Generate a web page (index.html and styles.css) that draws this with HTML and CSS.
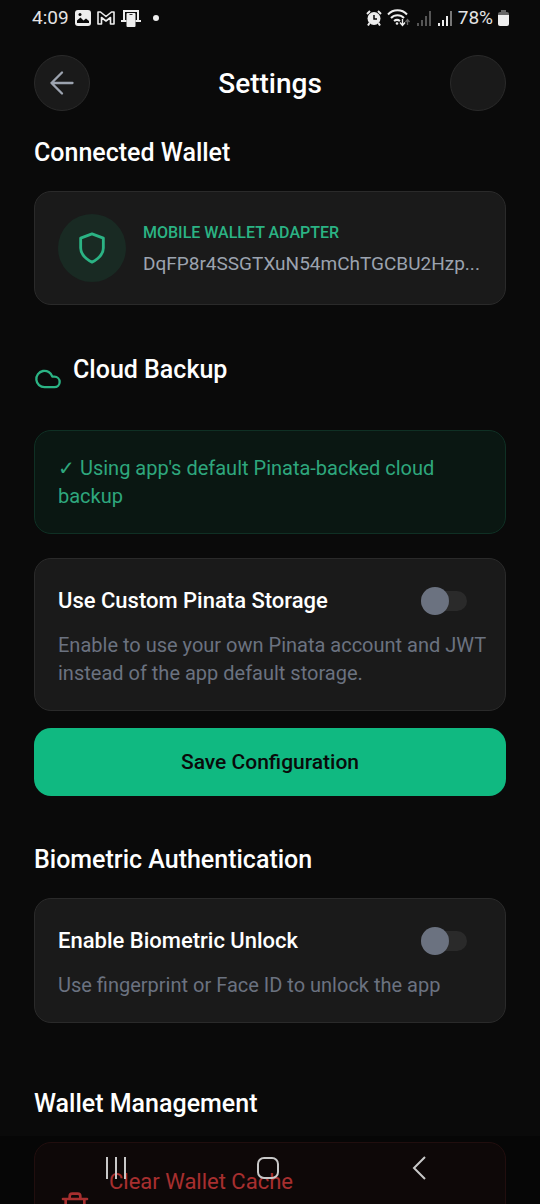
FILE: index.html
```html
<!DOCTYPE html>
<html lang="en">
<head>
<meta charset="utf-8">
<meta name="viewport" content="width=device-width, initial-scale=1">
<title>Settings</title>
<link rel="stylesheet" href="styles.css">
</head>
<body>
<div class="status-bar">
  <div class="status-group">
    <span class="status-text">4:09</span>
    <svg width="16" height="16" viewBox="0 0 16 16"><rect x="0" y="0" width="16" height="16" rx="3" fill="#eee"/><path d="M2 13V10.500l3.500-3 3 3 2.500-2 3 2.500v2z" fill="#0a0a0a"/><circle cx="5" cy="4.500" r="1.500" fill="#0a0a0a"/></svg>
    <svg width="18" height="14" viewBox="0 0 18 14" fill="none" stroke="#eee" stroke-width="1.600" stroke-linejoin="round"><path d="M1 13V1h2.500L9 5.500 14.500 1H17v12h-3.500V6.500L9 10 4.500 6.500V13z"/></svg>
    <svg width="20" height="18" viewBox="0 0 20 18" fill="none" stroke="#eee" stroke-width="2"><path d="M3 11V2h14v9M0 12h5.500M14.500 12H20"/><rect x="5.500" y="4" width="9" height="14" rx="1" fill="#eee" stroke="none"/><path d="M8.500 5.500h3" stroke="#333" stroke-width="1"/></svg>
    <span class="status-dot"></span>
  </div>
  <div class="status-group status-group-end">
    <svg width="16" height="16" viewBox="0 0 16 16"><circle cx="8" cy="8.500" r="6.500" fill="#eee"/><path d="M1 4l3-3M15 4l-3-3M3.500 13L2 15.500M12.500 13l1.500 2.500" stroke="#eee" stroke-width="2"/><path d="M8 5v4h3" fill="none" stroke="#0a0a0a" stroke-width="1.500"/></svg>
    <svg width="24" height="18" viewBox="0 0 24 18" fill="none" stroke="#eee" stroke-width="2"><path d="M1 5.500a13 13 0 0 1 19 0M4 9a9 9 0 0 1 13 0M7 12a5 5 0 0 1 6 0"/><circle cx="10" cy="14.500" r="1.300" fill="#eee" stroke="none"/><path d="M15.500 10v6M13 13.500l2.500 3 2.500-3" stroke-width="1.400"/><path d="M20.500 16v-5M18.500 13l2-2.500 2 2.500" stroke="#666" stroke-width="1.300"/></svg>
    <svg width="16" height="16" viewBox="0 0 16 16" stroke="#555" stroke-width="2"><path d="M2 16v-3M6 16v-6M10 16V6"/><path d="M14 16V1"/></svg>
    <svg width="16" height="16" viewBox="0 0 16 16" stroke="#eee" stroke-width="2"><path d="M2 16v-3M6 16v-6M10 16V6"/><path d="M14 16V1" stroke="#777"/></svg>
    <span class="status-text">78%</span>
    <svg width="11" height="16" viewBox="0 0 11 16"><path d="M3 0h5v2h1a2 2 0 0 1 2 2v2H0V4a2 2 0 0 1 2-2h1z" fill="#666"/><path d="M0 5h11v9a2 2 0 0 1-2 2H2a2 2 0 0 1-2-2z" fill="#eee"/></svg>
  </div>
</div>

<main class="screen">
  <header class="header">
    <button class="round-button" type="button" aria-label="Back">
      <svg width="28" height="28" viewBox="0 0 24 24" fill="none" stroke="#9ca3af" stroke-width="2" stroke-linecap="round" stroke-linejoin="round"><path d="M21 12H3M12 3l-9 9 9 9"/></svg>
    </button>
    <h1 class="title">Settings</h1>
    <div class="round-button"></div>
  </header>

  <h2 class="section-title">Connected Wallet</h2>
  <section class="card wallet-card">
    <div class="wallet-badge">
      <svg width="34" height="34" viewBox="0 0 24 24" fill="none" stroke="#2bb384" stroke-width="2" stroke-linejoin="round"><path d="M12 22s8-3.500 8-10V5l-8-3-8 3v7c0 6.500 8 10 8 10z"/></svg>
    </div>
    <div class="wallet-info">
      <div class="wallet-label">MOBILE WALLET ADAPTER</div>
      <div class="wallet-address">DqFP8r4SSGTXuN54mChTGCBU2Hzp...</div>
    </div>
  </section>

  <div class="cloud-heading">
    <svg class="cloud-icon" width="28" height="28" viewBox="0 0 24 24" fill="none" stroke="#2bb384" stroke-width="2" stroke-linejoin="round"><path d="M17.500 19H9a7 7 0 1 1 6.710-9h1.790a4.500 4.500 0 1 1 0 9z"/></svg>
    <h2 class="section-heading">Cloud Backup</h2>
  </div>
  <p class="notice">✓ Using app's default Pinata-backed cloud backup</p>

  <section class="card option-card">
    <div class="option-row">
      <label class="option-title" for="custom-storage">Use Custom Pinata Storage</label>
      <input class="switch" id="custom-storage" type="checkbox" role="switch">
    </div>
    <p class="option-text">Enable to use your own Pinata account and JWT instead of the app default storage.</p>
  </section>
  <button class="save-button" type="button">Save Configuration</button>

  <h2 class="section-title biometric-title">Biometric Authentication</h2>
  <section class="card option-card">
    <div class="option-row">
      <label class="option-title" for="biometric">Enable Biometric Unlock</label>
      <input class="switch" id="biometric" type="checkbox" role="switch">
    </div>
    <p class="option-text">Use fingerprint or Face ID to unlock the app</p>
  </section>

  <h2 class="section-title management-title">Wallet Management</h2>
  <button class="danger-card" type="button">
    <svg width="32" height="32" viewBox="0 0 24 24" fill="none" stroke="#ef4444" stroke-width="2" stroke-linecap="round" stroke-linejoin="round"><path d="M3 6h18M19 6v14a2 2 0 0 1-2 2H7a2 2 0 0 1-2-2V6M8 6V4a2 2 0 0 1 2-2h4a2 2 0 0 1 2 2v2M10 11v6M14 11v6"/></svg>
    <span class="danger-title">Clear Wallet Cache</span>
  </button>
</main>

<nav class="system-nav">
  <button class="nav-button" type="button" aria-label="Recent apps"><svg width="24" height="24" viewBox="0 0 24 24" stroke="#c8c8c8" stroke-width="2"><path d="M3 1v22M12 1v22M21 1v22"/></svg></button>
  <button class="nav-button" type="button" aria-label="Home"><svg width="24" height="24" viewBox="0 0 24 24" fill="none" stroke="#c8c8c8" stroke-width="2"><rect x="2" y="2" width="20" height="20" rx="6"/></svg></button>
  <button class="nav-button" type="button" aria-label="Go back"><svg width="24" height="24" viewBox="0 0 24 24" fill="none" stroke="#c8c8c8" stroke-width="2"><path d="M17 1L6 12l11 11"/></svg></button>
</nav>
</body>
</html>
```
FILE: styles.css
```css
* {
  box-sizing: border-box;
}

body {
  margin: 0;
  height: 100vh;
  overflow: hidden;
  display: flex;
  flex-direction: column;
  background: #0a0a0a;
  color: #fff;
  font-family: Roboto, "Noto Sans", sans-serif;
}

h1,
h2,
p {
  margin: 0;
  font-weight: 500;
}

button {
  margin: 0;
  border: 0;
  padding: 0;
  background: none;
  color: inherit;
  font-family: inherit;
}

svg {
  display: block;
  flex: none;
}

.status-bar {
  flex: none;
  display: flex;
  justify-content: space-between;
  height: 36px;
  padding: 0 31px 0 32px;
}

.status-group {
  display: flex;
  align-items: center;
  gap: 6px;
}

.status-group-end {
  gap: 5px;
}

.status-text {
  font-size: 19px;
  line-height: 24px;
  color: #e4e4e4;
}

.status-dot {
  width: 6px;
  height: 6px;
  margin-left: 6px;
  border-radius: 50%;
  background: #eee;
}

.screen {
  flex: 1;
  min-height: 0;
  overflow: hidden;
  padding: 19px 34px 0;
}

.header {
  display: flex;
  align-items: center;
  justify-content: space-between;
}

.round-button {
  display: flex;
  align-items: center;
  justify-content: center;
  width: 56px;
  height: 56px;
  border: 1px solid #2a2a2a;
  border-radius: 50%;
  background: #1a1a1a;
}

.title {
  padding-top: 2px;
  font-size: 28px;
  line-height: 36px;
}

.section-title,
.section-heading {
  font-size: 25px;
  line-height: 36px;
}

.section-title {
  margin: 24px 0 20px;
}

.card {
  border: 1px solid #2a2a2a;
  border-radius: 17px;
  background: #1a1a1a;
}

.wallet-card {
  display: flex;
  align-items: center;
  gap: 17px;
  padding: 22px 23px;
}

.wallet-badge {
  flex: none;
  display: flex;
  align-items: center;
  justify-content: center;
  width: 68px;
  height: 68px;
  border-radius: 50%;
  background: #192a23;
}

.wallet-info {
  min-width: 0;
}

.wallet-label {
  font-size: 16px;
  line-height: 32px;
  font-weight: 500;
  color: #2bb384;
}

.wallet-address {
  font-size: 19px;
  line-height: 30px;
  color: #9ca3af;
  white-space: nowrap;
}

.cloud-heading {
  display: flex;
  gap: 11px;
  min-height: 41px;
  margin: 47px 0 37px;
}

.cloud-icon {
  align-self: flex-end;
}

.notice {
  padding: 23px;
  border: 1px solid #0f3024;
  border-radius: 17px;
  background: #0a1712;
  color: #2ea77d;
  font-size: 20px;
  line-height: 28px;
  font-weight: 400;
  margin-bottom: 24px;
}

.option-card {
  padding: 23px 15px 23px 23px;
}

.option-row {
  display: flex;
  align-items: center;
  justify-content: space-between;
  min-height: 38px;
  margin-bottom: 11px;
  padding-right: 23px;
}

.option-title {
  font-size: 22px;
  line-height: 30px;
  font-weight: 500;
}

.option-text {
  font-size: 20px;
  line-height: 28px;
  font-weight: 400;
  color: #6b7280;
}

.switch {
  appearance: none;
  flex: none;
  width: 46px;
  height: 20px;
  margin: 0;
  border-radius: 10px;
  background: #2a2a2a;
}

.switch::before {
  content: "";
  display: block;
  width: 28px;
  height: 28px;
  margin-top: -4px;
  border-radius: 50%;
  background: #6b7280;
}

.switch:checked::before {
  margin-left: auto;
  background: #10b981;
}

.save-button {
  display: block;
  width: 100%;
  height: 68px;
  margin-top: 17px;
  border-radius: 17px;
  background: #10b981;
  color: #0a0a0a;
  font-size: 21px;
  font-weight: 500;
}

.biometric-title {
  margin-top: 46px;
}

.management-title {
  margin-top: 63px;
}

.danger-card {
  display: flex;
  align-items: center;
  gap: 18px;
  width: 100%;
  min-height: 130px;
  padding: 24px;
  border: 1px solid #301515;
  border-radius: 17px;
  background: #150c0c;
}

.danger-title {
  align-self: flex-start;
  font-size: 22px;
  line-height: 30px;
  font-weight: 400;
  color: #ef4444;
}

.system-nav {
  position: fixed;
  right: 0;
  bottom: 0;
  left: 0;
  display: flex;
  justify-content: center;
  gap: 128px;
  height: 68px;
  padding: 0 4px 4px 0;
  background: rgba(0, 0, 0, 0.3);
}

.nav-button {
  display: flex;
  align-items: center;
}
```
